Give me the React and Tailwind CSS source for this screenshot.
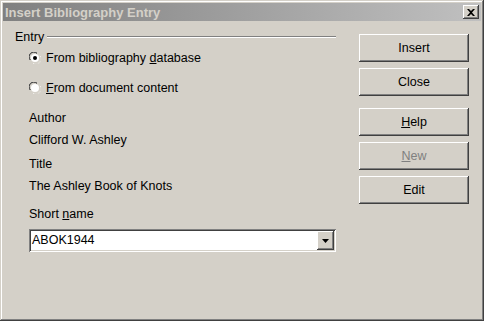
import React from "react";

const raised =
  "shadow-[inset_-1px_-1px_#404040,inset_1px_1px_#ffffff,inset_-2px_-2px_#808080,inset_2px_2px_#d4d0c8]";

const Radio = ({ checked }) => (
  <svg width="12" height="12" viewBox="0 0 12 12" className="shrink-0">
    <path d="M0.5 8 A5.5 5.5 0 0 1 8 0.5" fill="none" stroke="#808080" />
    <path d="M1.5 8 A4.5 4.5 0 0 1 8 1.5" fill="none" stroke="#404040" />
    <path d="M4 11.5 A5.5 5.5 0 0 0 11.5 4" fill="none" stroke="#ffffff" />
    <path d="M4 10.5 A4.5 4.5 0 0 0 10.5 4" fill="none" stroke="#d4d0c8" />
    <circle cx="6" cy="6" r="4" fill="#ffffff" />
    {checked && <circle cx="6" cy="6" r="2" fill="#000000" />}
  </svg>
);

const Button = ({ children, disabled, className = "" }) => (
  <button
    type="button"
    className={`w-[110px] h-[28px] bg-[#d4d0c8] text-[12.5px] ${raised} ${
      disabled ? "text-[#808080]" : "text-black"
    } ${className}`}
  >
    {children}
  </button>
);

export default function App() {
  return (
    <div
      className="w-[484px] h-[321px] bg-[#d4d0c8] p-[3px] flex flex-col shadow-[inset_-1px_-1px_#404040,inset_1px_1px_#d4d0c8,inset_-2px_-2px_#808080,inset_2px_2px_#ffffff]"
      style={{ fontFamily: '"Liberation Sans", Arial, sans-serif' }}
    >
      {/* title bar */}
      <div className="h-[18px] flex items-center justify-between bg-gradient-to-r from-[#808080] to-[#c0c0c0] pl-[2px] pr-[2px]">
        <span className="text-[13px] font-bold text-[#d4d0c8] leading-none">
          Insert Bibliography Entry
        </span>
        <div
          className={`w-[16px] h-[14px] bg-[#d4d0c8] flex items-center justify-center ${raised}`}
        >
          <svg width="8" height="7" viewBox="0 0 8 7">
            <path
              d="M0 0h2l2 2 2-2h2L5 3.5 8 7H6L4 5 2 7H0l3-3.5z"
              fill="#000"
            />
          </svg>
        </div>
      </div>

      <div className="flex flex-1">
        {/* left column */}
        <div className="w-[321px] ml-[12px] flex flex-col text-[12.5px] text-black">
          <div className="mt-[9px] h-[14px] flex items-center gap-[3px]">
            <span className="leading-none">Entry</span>
            <div className="flex-1 border-t border-t-[#808080] border-b border-b-white" />
          </div>

          <div className="mt-[7px] h-[14px] ml-[14px] flex items-center gap-[5px]">
            <Radio checked />
            <span>
              From bibliography <span className="underline">d</span>atabase
            </span>
          </div>
          <div className="mt-[16px] h-[14px] ml-[14px] flex items-center gap-[5px]">
            <Radio />
            <span>
              <span className="underline">F</span>rom document content
            </span>
          </div>

          <div className="ml-[14px] flex flex-col">
            <div className="mt-[16px] h-[14px] flex items-center">Author</div>
            <div className="mt-[8px] h-[14px] flex items-center">Clifford W. Ashley</div>
            <div className="mt-[10px] h-[14px] flex items-center">Title</div>
            <div className="mt-[8px] h-[14px] flex items-center">The Ashley Book of Knots</div>
            <div className="mt-[14px] h-[14px] flex items-center">
              <span>
                Short <span className="underline">n</span>ame
              </span>
            </div>

            <div className="mt-[8px] w-[307px] h-[23px] bg-white flex items-center shadow-[inset_1px_1px_#808080,inset_-1px_-1px_#ffffff,inset_2px_2px_#404040,inset_-2px_-2px_#d4d0c8] pl-[3px] pr-[2px]">
              <span className="flex-1">ABOK1944</span>
              <div
                className={`w-[17px] h-[19px] bg-[#d4d0c8] flex items-center justify-center ${raised}`}
              >
                <svg width="7" height="4" viewBox="0 0 7 4">
                  <path d="M0 0h7L3.5 4z" fill="#000" />
                </svg>
              </div>
            </div>
          </div>
        </div>

        {/* right column */}
        <div className="ml-[23px] flex flex-col pt-[13px]">
          <Button>Insert</Button>
          <Button className="mt-[6px]">Close</Button>
          <Button className="mt-[12px]">
            <span className="underline">H</span>elp
          </Button>
          <Button className="mt-[6px]" disabled>
            <span className="underline">N</span>ew
          </Button>
          <Button className="mt-[6px]">Edit</Button>
        </div>
      </div>
    </div>
  );
}
